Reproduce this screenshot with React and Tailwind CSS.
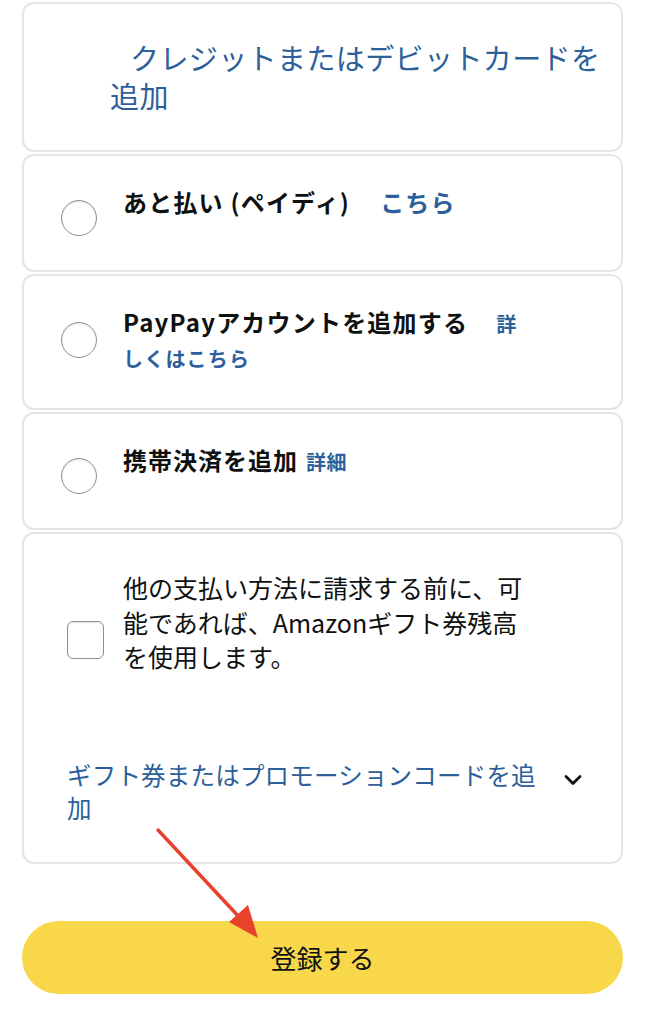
import React from "react";

const font = { fontFamily: '"Noto Sans CJK JP", "Noto Sans", sans-serif' };

function Radio() {
  return (
    <div className="w-[36px] h-[36px] shrink-0 rounded-full border-[1.5px] border-[#8d9096] bg-white shadow-[inset_0_1px_2px_rgba(0,0,0,0.12)]"></div>
  );
}

function Card({ className, children }) {
  return (
    <div className={`rounded-[12px] border-2 border-[#e3e6e6] bg-white ${className}`}>
      {children}
    </div>
  );
}

export default function App() {
  return (
    <div className="relative w-[645px] h-[1024px] bg-white overflow-hidden" style={font}>
      <div className="flex flex-col gap-[2px] px-[22px] pt-[2px]">
        {/* Credit card */}
        <Card className="h-[150px] pl-[86px] pr-[10px] pt-[34px]">
          <p className="text-[29px] leading-[38px] text-[#2d5f9a] indent-[20px] tracking-[0.4px] whitespace-nowrap">
            クレジットまたはデビットカードを
            <br />
            追加
          </p>
        </Card>

        {/* Paidy */}
        <Card className="h-[118px] pl-[37px] pt-[29px]">
          <div className="flex items-start gap-[26px]">
            <div className="mt-[15px]">
              <Radio />
            </div>
            <p className="text-[24px] leading-[34px] font-bold tracking-[1.2px] text-[#0f1111] whitespace-nowrap">
              あと払い (ペイディ)
              <span className="ml-[30px] text-[#2d5f9a]">こちら</span>
            </p>
          </div>
        </Card>

        {/* PayPay */}
        <Card className="h-[136px] pl-[37px] pt-[29px]">
          <div className="flex items-start gap-[26px]">
            <div className="mt-[17px]">
              <Radio />
            </div>
            <p className="text-[24px] leading-[33px] font-bold tracking-[1.2px] text-[#0f1111] whitespace-nowrap">
              PayPayアカウントを追加する
              <span className="ml-[28px] text-[20px] text-[#2d5f9a]">詳</span>
              <br />
              <span className="text-[20px] text-[#2d5f9a]">しくはこちら</span>
            </p>
          </div>
        </Card>

        {/* Carrier billing */}
        <Card className="h-[118px] pl-[37px] pt-[29px]">
          <div className="flex items-start gap-[26px]">
            <div className="mt-[15px]">
              <Radio />
            </div>
            <p className="text-[24px] leading-[34px] font-bold tracking-[1px] text-[#0f1111] whitespace-nowrap">
              携帯決済を追加
              <span className="ml-[8px] text-[20px] tracking-[0.5px] text-[#2d5f9a]">詳細</span>
            </p>
          </div>
        </Card>

        {/* Gift card balance */}
        <Card className="h-[332px] pl-[43px] pr-[40px] pt-[36px] flex flex-col">
          <div className="flex items-start gap-[19px]">
            <div className="mt-[51px] w-[37px] h-[38px] shrink-0 rounded-[6px] border-[1.5px] border-[#8d9096] bg-white shadow-[inset_0_1px_2px_rgba(0,0,0,0.1)]"></div>
            <p className="text-[25px] leading-[34.5px] text-[#0f1111] whitespace-nowrap">
              他の支払い方法に請求する前に、可
              <br />
              能であれば、Amazonギフト券残高
              <br />
              を使用します。
            </p>
          </div>
          <div className="mt-[84px] flex items-start justify-between">
            <p className="text-[24.5px] leading-[33px] tracking-[0.2px] text-[#2d5f9a] whitespace-nowrap">
              ギフト券またはプロモーションコードを追
              <br />
              加
            </p>
            <svg className="mt-[15px] mr-[-2px]" width="20" height="14" viewBox="0 0 20 14" fill="none">
              <path d="M3 3.5 L10 10.5 L17 3.5" stroke="#0f1111" strokeWidth="2.8" strokeLinecap="round" strokeLinejoin="round" />
            </svg>
          </div>
        </Card>

        {/* Submit */}
        <button className="mt-[55px] h-[73px] w-full rounded-full bg-[#f8d84a] text-[26px] text-[#0f1111]">
          登録する
        </button>
      </div>

      {/* Red annotation arrow */}
      <svg className="absolute left-0 top-0 pointer-events-none" width="645" height="1024" viewBox="0 0 645 1024">
        <line x1="158" y1="830" x2="240" y2="918" stroke="#e8412c" strokeWidth="3.5" strokeLinecap="round" />
        <polygon points="258,938 229,922 248,905" fill="#e8412c" />
      </svg>
    </div>
  );
}
